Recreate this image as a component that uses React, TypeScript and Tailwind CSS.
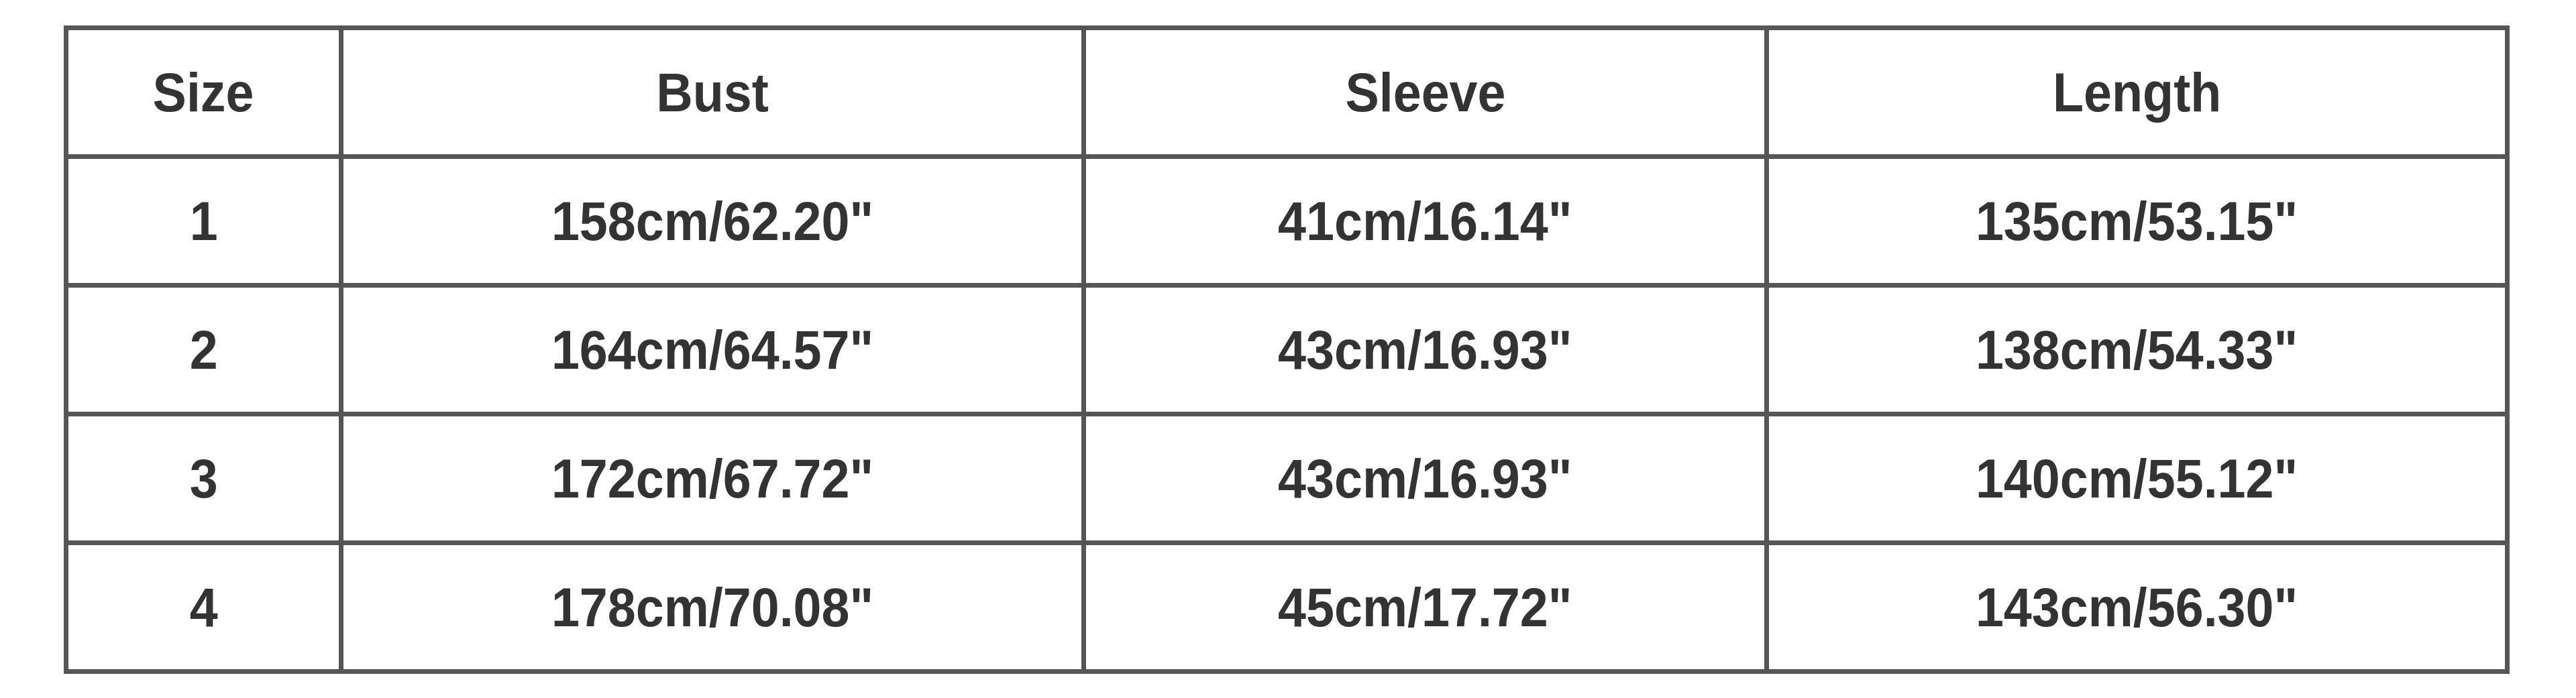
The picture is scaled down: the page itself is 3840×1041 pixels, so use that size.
const headers = ["Size", "Bust", "Sleeve", "Length"];

const rows = [
  ["1", "158cm/62.20\"", "41cm/16.14\"", "135cm/53.15\""],
  ["2", "164cm/64.57\"", "43cm/16.93\"", "138cm/54.33\""],
  ["3", "172cm/67.72\"", "43cm/16.93\"", "140cm/55.12\""],
  ["4", "178cm/70.08\"", "45cm/17.72\"", "143cm/56.30\""],
];

const widths = ["w-[410px]", "w-[1107px]", "w-[1018px]", "w-[1104px]"];

function Cell({ children }: { children: React.ReactNode }) {
  return (
    <td className="h-[192px] border-[7px] border-[#555555] p-0 text-center align-middle">
      <span className="inline-block scale-x-[0.92] text-[82px] font-bold leading-none text-[#333333]">
        {children}
      </span>
    </td>
  );
}

export default function App() {
  return (
    <div className="min-h-[1041px] w-[3840px] bg-white pt-[38px] pl-[95px] font-['Liberation_Sans',Arial,sans-serif]">
      <table className="table-fixed border-collapse">
        <colgroup>
          {widths.map((w) => (
            <col key={w} className={w} />
          ))}
        </colgroup>
        <tbody>
          <tr>
            {headers.map((h) => (
              <Cell key={h}>{h}</Cell>
            ))}
          </tr>
          {rows.map((r) => (
            <tr key={r[0]}>
              {r.map((v, i) => (
                <Cell key={i}>{v}</Cell>
              ))}
            </tr>
          ))}
        </tbody>
      </table>
    </div>
  );
}
